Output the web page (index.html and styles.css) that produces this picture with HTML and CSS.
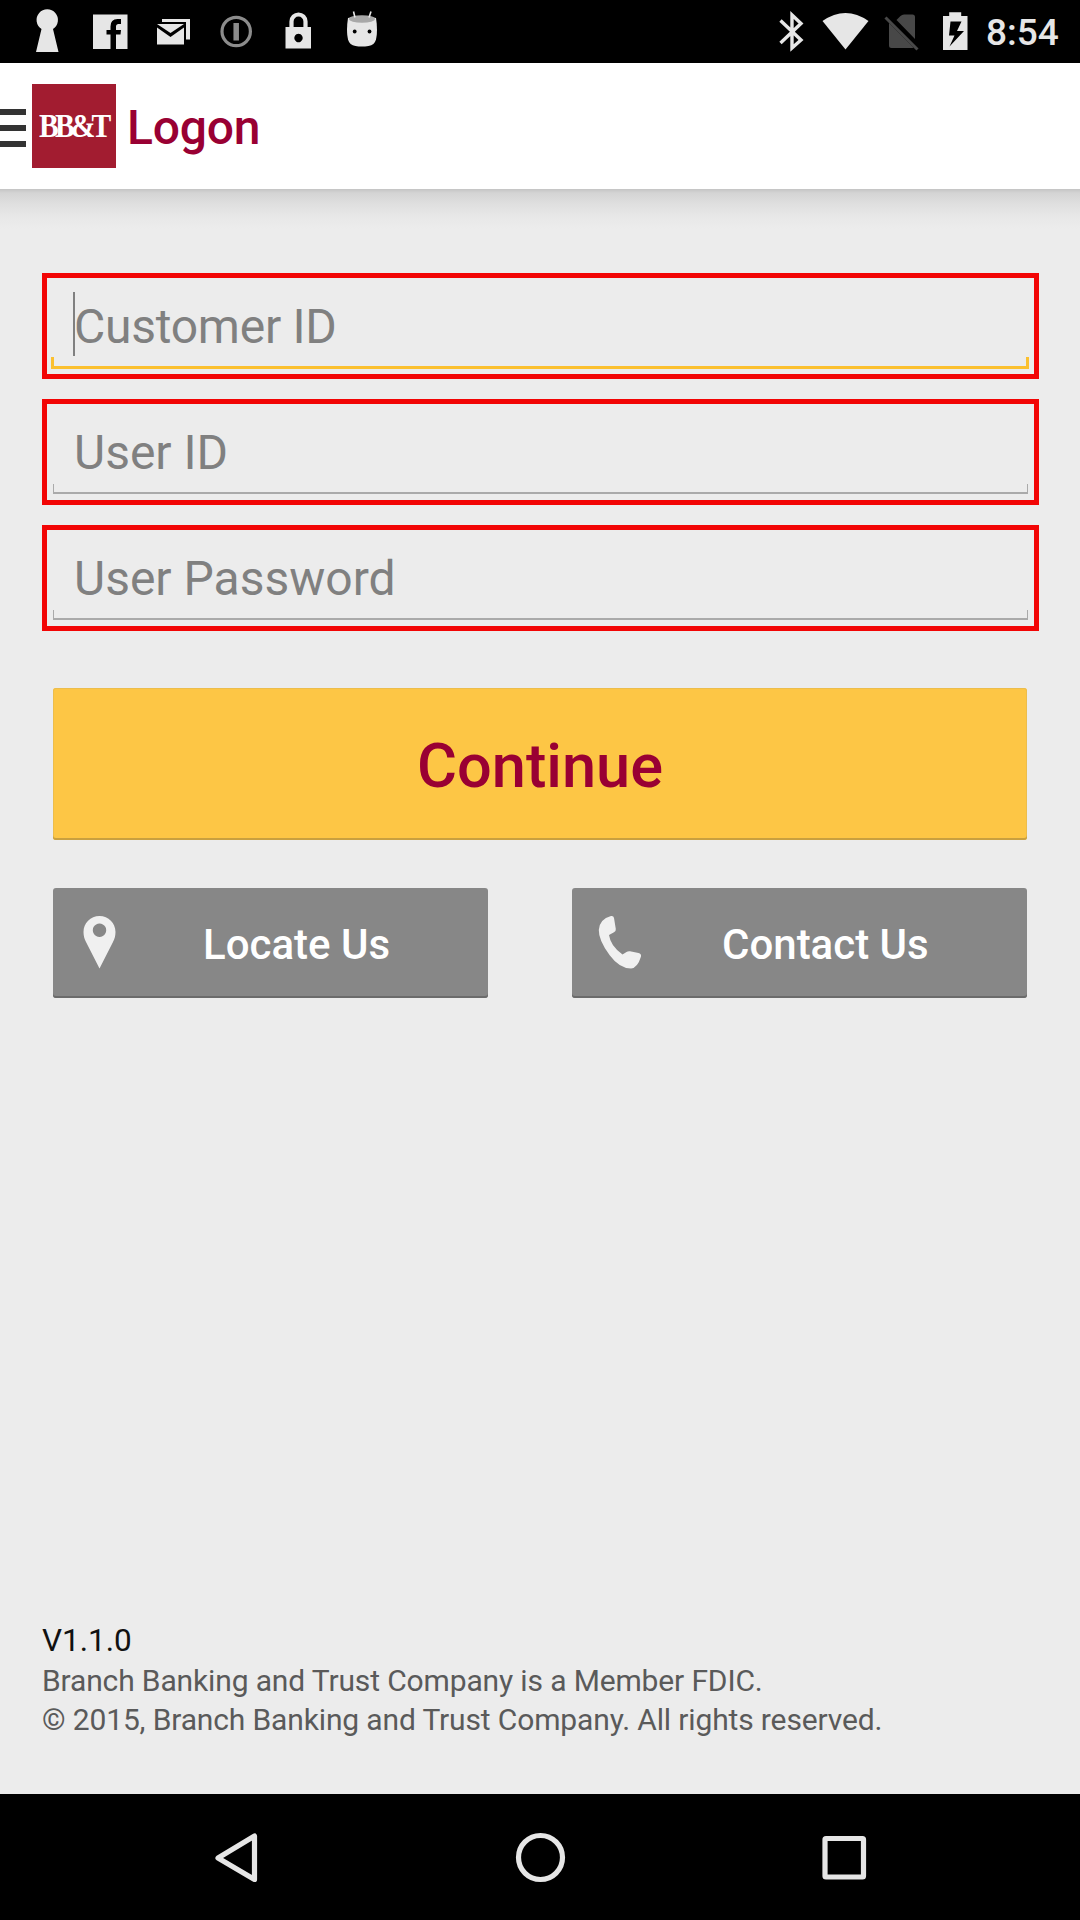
FILE: index.html
```html
<!DOCTYPE html>
<html lang="en">
<head>
<meta charset="utf-8">
<title>Logon</title>
<link rel="stylesheet" href="styles.css">
</head>
<body>
<div class="screen">
  <div class="status">
    <div class="notifications">
      <svg class="icon" viewBox="16 0 63 63"><path d="M41.500 29a10.700 10.700 0 1 1 11.500 0L58.500 52H36Z"/></svg>
      <svg class="icon" viewBox="79 0 63 63"><path fill-rule="evenodd" d="M93 14.500h34.500V49H116V34.500h4.500L121 30h-5v-3.500q0-2.500 2.500-2.500h2.500v-5h-3.500q-7 0-7 7.500V30h-4v4.500h4V49H93Z"/></svg>
      <svg class="icon" viewBox="142 0 63 63"><path d="M162 19h28v20.500h-4V22h-24ZM157 24h27l-13.500 9ZM157 27.500l13.500 9.500L184 27.500V44.500h-27Z"/></svg>
      <svg class="icon" viewBox="205 0 63 63"><g fill="none" stroke="#8c8c8c"><circle cx="236.200" cy="31.500" r="14.200" stroke-width="3.200"/><path d="M236.200 23v17.500" stroke-width="5.500"/></g></svg>
      <svg class="icon" viewBox="268 0 63 63"><path d="M291.500 27v-5.500a7 7 0 0 1 14 0V27" fill="none" stroke="#e6e6e6" stroke-width="4.200"/><path fill-rule="evenodd" d="M285.500 27H311v21.500H285.500ZM298.500 33.800a4.200 4.200 0 1 0 .01 0Z"/></svg>
      <svg class="icon" viewBox="331 0 63 63"><path d="M348 18q14-4 28 0 2 13 0 21.500-1.500 5.500-7.500 6.500-7 1-13 0-6-1-7.500-6.500-2-9 0-21.500Z"/><ellipse cx="362" cy="19" rx="13" ry="3.800" fill="#a8a8a8"/><path d="m353.500 11.500 1.500 6M371 11.500l-2 6" stroke="#e6e6e6" stroke-width="1.600"/><g fill="#000"><circle cx="354.700" cy="31.500" r="1.900"/><circle cx="369.500" cy="31.500" r="1.900"/></g></svg>
    </div>
    <div class="system">
      <svg class="bluetooth" viewBox="774 0 34 63"><path d="m780.500 20.500 20.500 19.500-9 8V15l9 8.500-20.500 19.500" fill="none" stroke="#e6e6e6" stroke-width="3.400"/></svg>
      <svg class="wifi" viewBox="820 0 50 63"><path d="M822.500 21q23-16 46 0l-23 28.500Z"/></svg>
      <svg class="sim" viewBox="882 0 40 63"><path d="M896.500 20l4-4q1.500-1.500 3.500-1.500h8.500q2.500 0 2.500 2.500v22ZM889 23l24.500 24.500-1 .5h-21q-2.500 0-2.500-2.500Z" fill="#484848"/><path d="m885.500 17.500 32 32" stroke="#484848" stroke-width="3"/></svg>
      <svg class="battery" viewBox="940 0 30 63"><path fill-rule="evenodd" d="M943 16h6.200v-3.800h12V16h6.300v34H943ZM950.500 21.500l-1.500 14h5.500l-5 11L964 31h-7l4.500-9.500Z"/></svg>
      <span class="clock">8:54</span>
    </div>
  </div>

  <header class="appbar">
    <div class="menu"><i></i><i></i><i></i></div>
    <div class="logo"><span>BB&amp;T</span></div>
    <h1 class="title">Logon</h1>
  </header>

  <main class="content">
    <div class="fields">
      <div class="field focused"><span class="hint">Customer ID</span><i class="caret"></i><i class="underline"></i></div>
      <div class="field"><span class="hint">User ID</span><i class="underline"></i></div>
      <div class="field"><span class="hint">User Password</span><i class="underline"></i></div>
    </div>
    <div class="button primary"><span>Continue</span></div>
    <div class="actions">
      <div class="button locate">
        <svg class="glyph" viewBox="78 911 44 64"><path fill-rule="evenodd" d="M99.500 916c9 0 16 7 16 16 0 4-1 7-2.500 10l-13.500 26.500L86 942c-1.500-3-2.500-6-2.500-10 0-9 7-16 16-16Zm0 7.500a6.700 6.700 0 1 0 .01 0Z"/></svg>
        <span>Locate Us</span>
      </div>
      <div class="button contact">
        <svg class="glyph" viewBox="596 911 50 64"><path d="M611 916q2.500-.5 3 2l1.800 11q.3 2.500-1.800 3.200l-5 2.800q1.500 11 13.500 19.500l4-2.600q1.500-1 3.500-.7l8.500 1.800q3 .7 2.500 3.500-3.500 11.500-10 12-11.500 0-21.500-13.500-11-15-10.700-25 .7-11 12.200-14Z"/></svg>
        <span>Contact Us</span>
      </div>
    </div>
    <footer class="footer">
      <div class="version">V1.1.0</div>
      <div class="legal">Branch Banking and Trust Company is a Member FDIC.</div>
      <div class="legal">© 2015, Branch Banking and Trust Company. All rights reserved.</div>
    </footer>
  </main>

  <nav class="navbar">
    <svg viewBox="206 1827 60 60"><path d="M254.500 1836v43.500L218 1858Z"/></svg>
    <svg viewBox="510 1827 60 60"><circle cx="540.500" cy="1857.500" r="22"/></svg>
    <svg viewBox="814 1827 60 60"><rect x="825" y="1838.500" width="38.500" height="38.500" rx="1"/></svg>
  </nav>
</div>
</body>
</html>
```
FILE: styles.css
```css
* { box-sizing: border-box; }
body { margin: 0; font-family: Roboto, "Noto Sans", sans-serif; }
svg { display: block; flex: none; fill: #e6e6e6; }
.screen { width: 1080px; height: 1920px; display: flex; flex-direction: column; background: #ececec; }

.status { height: 63px; flex: none; background: #000; display: flex; justify-content: space-between; padding-left: 16px; }
.notifications, .system { display: flex; }
.icon { width: 63px; height: 63px; }
.bluetooth { width: 34px; height: 63px; margin-right: 12px; }
.wifi { width: 50px; height: 63px; margin-right: 12px; }
.sim { width: 40px; height: 63px; margin-right: 18px; }
.battery { width: 30px; height: 63px; margin-right: 16px; }
.clock { width: 94px; font-size: 37px; line-height: 66px; font-weight: 500; color: #e6e6e6; }

.appbar { height: 126px; flex: none; background: #fff; display: flex; align-items: center; }
.menu { width: 26px; display: flex; flex-direction: column; gap: 10px; padding-top: 4px; }
.menu i { height: 6px; background: #333; }
.logo { width: 84px; height: 84px; margin-left: 6px; background: #a21c30; color: #fff; display: flex; align-items: center; justify-content: center; }
.logo span { font: bold 34px/40px "Liberation Serif", serif; letter-spacing: -4.500px; margin-right: 1px; transform: scaleX(.87); }
.title { margin: 0; padding: 3px 0 0 11px; font-size: 48px; line-height: 60px; font-weight: 500; color: #990033; letter-spacing: -.2px; }

.content { flex: 1; display: flex; flex-direction: column; padding: 84px 41px 55px 42px; background: linear-gradient(#c4c4c4, #d4d4d4 4px, #dfdfdf 15px, #e8e8e8 28px, #ececec 40px); }
.fields { display: flex; flex-direction: column; gap: 20px; }
.field { position: relative; height: 106px; border: 5px solid #f20505; padding-left: 27px; display: flex; align-items: center; }
.hint { padding-top: 2px; font-size: 48px; line-height: 60px; color: #808080; }
.focused .hint { letter-spacing: -.25px; }
.underline { position: absolute; left: 6px; right: 6px; bottom: 6px; height: 10px; border: 1px solid #aaa; border-width: 0 1.500px 2px; }
.focused .underline { left: 4px; right: 5px; bottom: 5px; height: 12px; border: 3px solid #fbc02f; border-top: 0; }
.caret { position: absolute; left: 26px; top: 14px; width: 2px; height: 64px; background: #808080; }

.button { display: flex; align-items: center; border-radius: 3px; font-weight: 500; }
.primary { height: 152px; margin: 57px 12px 0 11px; padding-top: 4px; justify-content: center; background: #fdc645; color: #990033; font-size: 61.300px; box-shadow: inset 0 -2px #c9a03f, inset 0 0 0 1px #ecbd4c; }
.actions { display: flex; justify-content: space-between; margin: 48px 12px 0 11px; }
.actions .button { height: 110px; background: #878787; color: #fff; font-size: 42px; box-shadow: inset 0 -2px #6b6b6b; }
.actions span { padding-top: 2px; }
.locate { width: 435px; padding-left: 25px; }
.contact { width: 455px; padding-left: 24px; }
.locate .glyph { width: 44px; height: 64px; margin-right: 81px; fill: #f0f0f0; }
.contact .glyph { width: 50px; height: 64px; margin-right: 76px; fill: #f0f0f0; }

.footer { margin-top: auto; }
.version { font-size: 31.500px; line-height: 38px; padding-bottom: 1px; color: #111; }
.legal { font-size: 30px; line-height: 39px; letter-spacing: -.14px; color: #5a5a5a; white-space: nowrap; }

.navbar { height: 126px; flex: none; background: #000; display: flex; justify-content: space-between; align-items: center; padding: 0 206px; }
.navbar svg { width: 60px; height: 60px; fill: none; stroke: #e6e6e6; stroke-width: 5.200; stroke-linejoin: round; }
```
